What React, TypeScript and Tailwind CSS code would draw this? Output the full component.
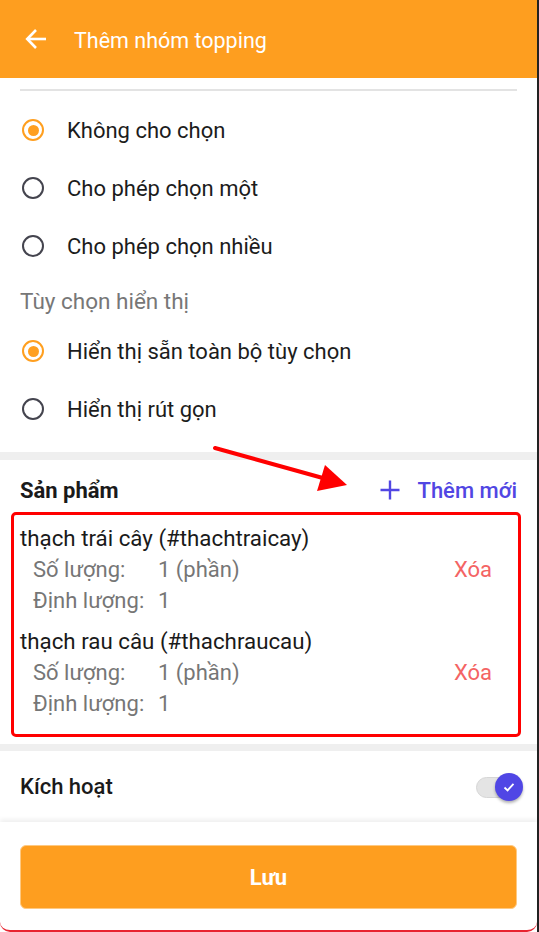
import React from 'react';

function Radio({ checked }: { checked?: boolean }) {
  return checked ? (
    <span className="flex h-[22px] w-[22px] shrink-0 items-center justify-center rounded-full border-[2.5px] border-[#ff9f1f]">
      <span className="h-[11px] w-[11px] rounded-full bg-[#ff9f1f]" />
    </span>
  ) : (
    <span className="block h-[22px] w-[22px] shrink-0 rounded-full border-[2.5px] border-[#44444e]" />
  );
}

function RadioRow({ label, checked }: { label: string; checked?: boolean }) {
  return (
    <div className="flex h-[58px] items-center">
      <div className="ml-[2px] w-[45px]">
        <Radio checked={checked} />
      </div>
      <span className="text-[22px] text-[#1c1c1c]">{label}</span>
    </div>
  );
}

const products = [
  { name: 'thạch trái cây (#thachtraicay)' },
  { name: 'thạch rau câu (#thachraucau)' },
];

export default function App() {
  return (
    <div
      className="relative flex min-h-[932px] w-full flex-col border-r-2 border-[#222] bg-white"
      style={{ fontFamily: 'Roboto, "Noto Sans", sans-serif' }}
    >
      {/* Header */}
      <header className="flex h-[78px] items-center bg-[#fe9e1f] pl-[25px] pt-[4px] text-white">
        <svg width="22" height="22" viewBox="0 0 22 22" fill="none" stroke="white" strokeWidth="2.6" className="-mt-[4px]">
          <path d="M21 11H2.5" />
          <path d="M11 2L2.2 11L11 20" strokeLinejoin="miter" />
        </svg>
        <h1 className="ml-[27px] text-[21.5px] font-normal">Thêm nhóm topping</h1>
      </header>

      {/* Chọn options */}
      <section className="px-5 pb-[14px] pt-[11px]">
        <div className="mb-[10px] border-t-2 border-[#e3e3e3]" />
        <RadioRow label="Không cho chọn" checked />
        <RadioRow label="Cho phép chọn một" />
        <RadioRow label="Cho phép chọn nhiều" />
        <div className="mt-[5px] h-[42px] text-[22.5px] leading-[42px] text-[#777]">Tùy chọn hiển thị</div>
        <RadioRow label="Hiển thị sẵn toàn bộ tùy chọn" checked />
        <RadioRow label="Hiển thị rút gọn" />
      </section>

      <div className="h-[8px] bg-[#efefef]" />

      {/* Sản phẩm */}
      <section className="pb-[7px]">
        <div className="mt-[10px] flex h-[40px] items-center justify-between px-5">
          <span className="text-[22px] font-bold text-[#1a1a1a]">Sản phẩm</span>
          <button className="flex items-center text-[22px] font-medium text-[#5146e3]">
            <svg width="20" height="20" viewBox="0 0 20 20" stroke="currentColor" strokeWidth="2.4">
              <path d="M10 0.5V19.5M0.5 10H19.5" />
            </svg>
            <span className="ml-[17px]">Thêm mới</span>
          </button>
        </div>
        <div className="mx-[11px] mt-[2px] w-[510px] rounded-[5px] border-[3px] border-[#f00] pb-[15px] pl-[6px] pr-[26px] pt-[8px]">
          {products.map((p, i) => (
            <div key={p.name} className={i > 0 ? 'mt-[10px]' : ''}>
              <div className="text-[22.3px] leading-[31px] text-[#1a1a1a]">{p.name}</div>
              <div className="flex items-center pl-[13px] text-[22px] leading-[31px] text-[#767676]">
                <span className="w-[125px]">Số lượng:</span>
                <span className="flex-1">1 (phần)</span>
                <span className="text-[#f46464]">Xóa</span>
              </div>
              <div className="flex items-center pl-[13px] text-[22px] leading-[31px] text-[#767676]">
                <span className="w-[125px]">Định lượng:</span>
                <span>1</span>
              </div>
            </div>
          ))}
        </div>
      </section>

      <div className="h-[7px] bg-[#efefef]" />

      {/* Kích hoạt */}
      <section className="flex h-[71px] items-center justify-between pl-5 pr-[14px]">
        <span className="text-[22px] font-medium text-[#1a1a1a]">Kích hoạt</span>
        <div className="relative h-[28px] w-[47px]">
          <div className="absolute left-0 top-[4px] h-[21px] w-[36px] rounded-full border border-[#d6d6d6] bg-[#e4e4e4]" />
          <div className="absolute right-0 top-0 flex h-[28px] w-[28px] items-center justify-center rounded-full bg-[#5046e5] shadow-[0_2px_3px_rgba(0,0,0,0.3)]">
            <svg width="14" height="14" viewBox="0 0 14 14" fill="none" stroke="white" strokeWidth="1.8">
              <path d="M2.5 7.5L5.6 10.4L11.5 3.8" />
            </svg>
          </div>
        </div>
      </section>

      {/* Bottom bar */}
      <footer className="flex-1 rounded-b-[10px] border-b-2 border-[#e8232f] bg-white px-5 pb-[21px] pt-[23px] shadow-[0_-3px_4px_rgba(0,0,0,0.06)]">
        <button className="flex h-[64px] w-full items-center justify-center rounded-[6px] border border-[#fec982] bg-[#fe9e1f] text-[22px] font-bold text-white">
          Lưu
        </button>
      </footer>

      {/* Annotation arrow */}
      <svg className="pointer-events-none absolute left-0 top-0" width="539" height="932">
        <path d="M215 448L330 480" stroke="#f00" strokeWidth="4" strokeLinecap="round" />
        <path d="M325 465L347 485L317 491Z" fill="#f00" />
      </svg>
    </div>
  );
}
